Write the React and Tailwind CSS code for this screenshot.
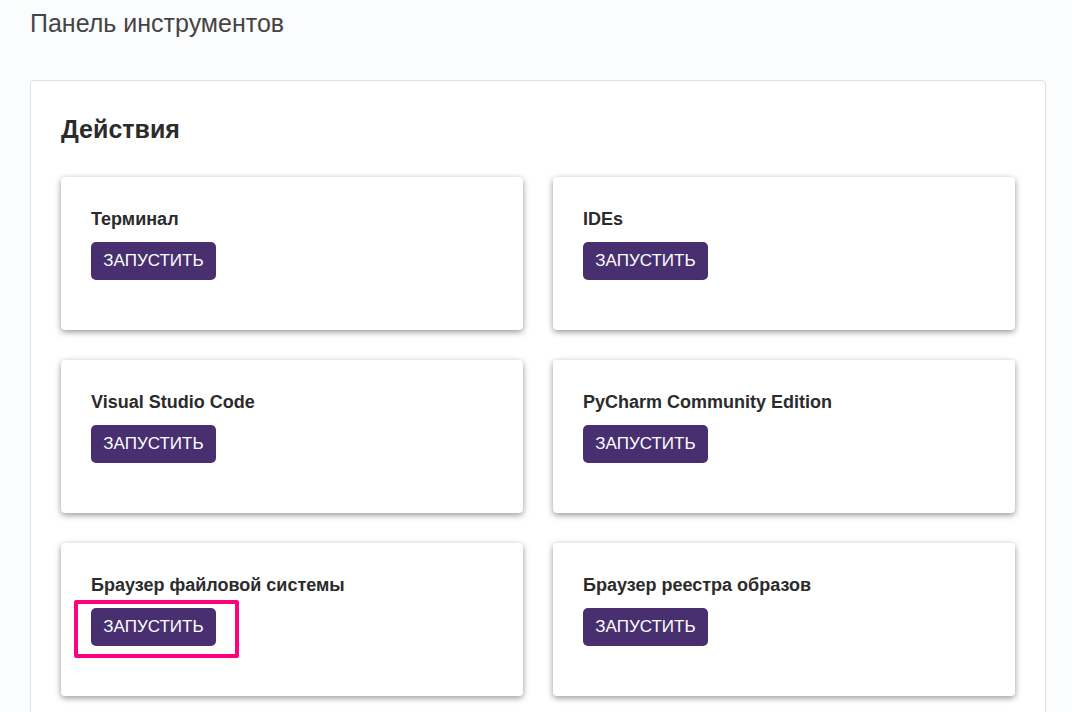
const actions = [
  "Терминал",
  "IDEs",
  "Visual Studio Code",
  "PyCharm Community Edition",
  "Браузер файловой системы",
  "Браузер реестра образов",
];

function ActionCard({ title, highlighted }) {
  return (
    <article className="rounded bg-white px-[30px] pt-[30px] pb-[50px] shadow-[0_2px_6px_rgba(0,0,0,0.42)]">
      <h3 className="mb-[11px] text-[18px] leading-[24px] font-bold">{title}</h3>
      <div className="relative w-fit">
        <button
          type="button"
          className="block h-[38px] min-w-[125px] rounded-[5px] bg-[#472f70] px-3 text-[17px] leading-[24px] text-white uppercase"
        >
          Запустить
        </button>
        {highlighted && (
          <span className="pointer-events-none absolute -top-2 -right-[23px] -bottom-3 -left-[17px] rounded-[2px] border-4 border-[#ff0080]" />
        )}
      </div>
    </article>
  );
}

export default function App() {
  return (
    <main className="h-screen overflow-hidden bg-[#fbfcfe] pr-[26px] pl-[30px] font-['Liberation_Sans',Arial,sans-serif] text-[#2b2b2b]">
      <h1 className="pt-2 text-[25px] leading-[30px] text-[#444444]">Панель инструментов</h1>
      <section className="mt-[42px] rounded border border-[#dfe0e2] bg-white px-[30px] pt-[32px] pb-[30px]">
        <h2 className="mb-[32px] text-[25px] leading-[32px] font-bold">Действия</h2>
        <div className="grid grid-cols-2 gap-[30px]">
          {actions.map((title) => (
            <ActionCard
              key={title}
              title={title}
              highlighted={title === "Браузер файловой системы"}
            />
          ))}
        </div>
      </section>
    </main>
  );
}
